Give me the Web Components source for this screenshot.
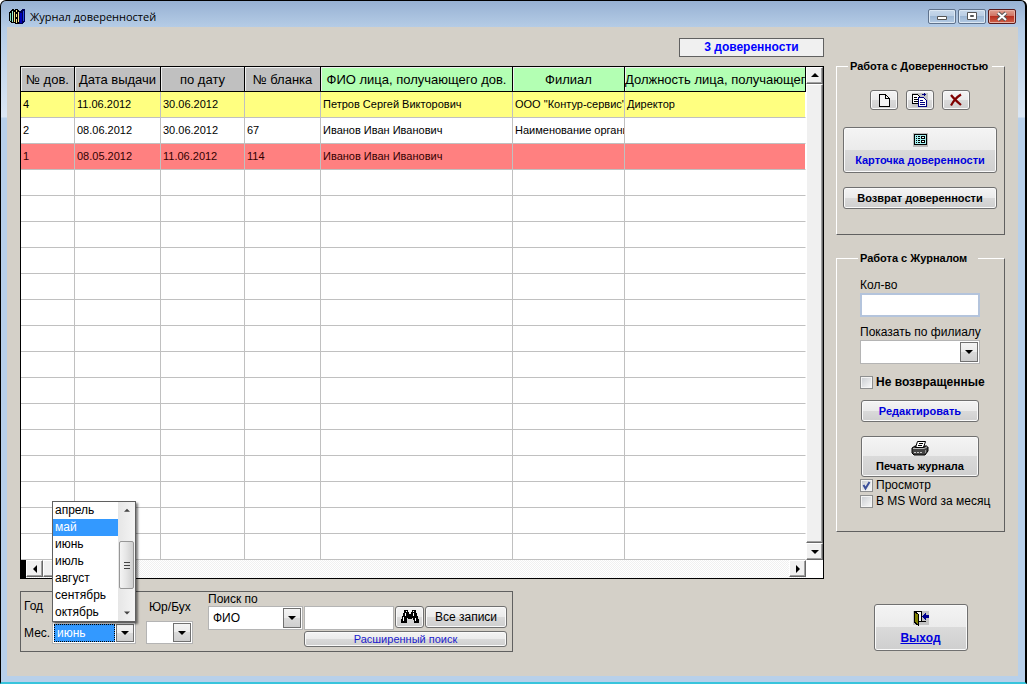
<!DOCTYPE html>
<html lang="ru">
<head>
<meta charset="utf-8">
<title>Журнал доверенностей</title>
<style>
    body {
        margin: 0;
        font: 12px/16px "Liberation Sans", Arial, sans-serif;
        color: #000;
    }
</style>
</head>
<body>

<journal-app></journal-app>

<script>
const BUTTON_FACE = `
    border: 1px solid #707070;
    border-radius: 3px;
    background: linear-gradient(#f4f4f4, #ebebeb 49%, #dadada 50%, #cfcfcf);
    box-shadow: inset 0 0 0 1px #fafafa;
`

const ICONS = {
    books: `<svg width="17" height="17" viewBox="0 0 17 17" shape-rendering="crispEdges">
        <path d="M0 4l3-3h2v14H2l-2-2z" fill="#000"/>
        <path d="M1 5h1v8H1z" fill="#7fe0c0"/><path d="M3 3h1v11H3z" fill="#9cf0d8"/>
        <path d="M4 3l2-2h2l3 3v11l-2 1H6l-2-2z" fill="#000"/>
        <path d="M5 4h1v10H5zM7 2h1v2H7zM7 6h1v3H7zM7 11h1v4H7zM9 4h1v10H9z" fill="#f4e48c"/>
        <path d="M10 4l3-3h3v12l-3 3h-3z" fill="#000050"/>
        <path d="M11 5h2v10h-2z" fill="#0000b8"/><path d="M14 3h1v10h-1z" fill="#2848e8"/></svg>`,
    page: `<svg width="16" height="16" viewBox="0 0 16 16" shape-rendering="crispEdges">
        <path d="M3.500 2.500h6l4 4v8h-10z" fill="#f4f4f4" stroke="#000"/>
        <path d="M9.500 2.500v4h4" fill="none" stroke="#000"/></svg>`,
    copy: `<svg width="16" height="16" viewBox="0 0 16 16" shape-rendering="crispEdges">
        <path d="M0 1h16v14H0z" fill="#c4c4c4"/>
        <path d="M.5 2.500h5l2 2v7h-7z" fill="#fff" stroke="#000"/>
        <path d="M2 5.500h3M2 7.500h4M2 9.500h4" stroke="#000"/>
        <path d="M6.500 5.500h5l3 3v6h-8z" fill="#fff" stroke="#000080"/>
        <path d="M8 8.500h3M8 10.500h5M8 12.500h5" stroke="#000080"/>
        <path d="M10 2.500h4M12.500 1v3" stroke="#000080"/></svg>`,
    cross: `<svg width="16" height="16" viewBox="0 0 16 16">
        <path d="M3 3q3 4 10 10M13 2.500Q7 6 3 13.500" fill="none" stroke="#800000" stroke-width="2.200"/></svg>`,
    card: `<svg width="15" height="14" viewBox="0 0 15 14" shape-rendering="crispEdges">
        <path d="M0 0h15v14H0z" fill="#bcbcbc"/>
        <path d="M1.500 1.500h12v10h-12z" fill="#a4f0f0" stroke="#000"/>
        <path d="M3 3.500h1M5 3.500h2M3 5.500h1M5 5.500h2M3 7.500h1M5 7.500h2M3 9.500h1M5 9.500h2" stroke="#000"/>
        <path d="M8.500 3.500h3v2h-3zM8.500 7.500h3v2h-3z" fill="#fff" stroke="#000"/></svg>`,
    printer: `<svg width="18" height="16" viewBox="0 0 18 16">
        <path d="M6.500 1.500h8l-2 6h-8z" fill="#fff" stroke="#000"/>
        <path d="M8 3.500h4M7 5.500h4" stroke="#000"/>
        <path d="M1 8l3-2h1l-.5 1.500h8L13 6h3l1 1v4l-3 4H3l-2-2z" fill="#444" stroke="#000"/>
        <path d="M2 8.500h11.500l3-2" fill="none" stroke="#b8b8b8"/>
        <path d="M3 12.500h9" stroke="#c8c8c8" stroke-dasharray="2 1"/>
        <path d="M14.500 10v3" stroke="#909090"/></svg>`,
    binoculars: `<svg width="18" height="16" viewBox="0 0 18 16" shape-rendering="crispEdges">
        <path d="M3 1h4v2h1v2h2V3h1V1h4v3h1v3h1v3h1v4h-5v-3h-1V9h-1v1H7V9H6v5H0v-4h1V7h1V4h1z"/>
        <path d="M4.500 4v3M2.500 8v4M12.500 4v3M14.500 9v3M5 2.500h1M12 2.500h1" stroke="#fff"/></svg>`,
    exit: `<svg width="16" height="16" viewBox="0 0 16 16" shape-rendering="crispEdges">
        <path d="M0 1h16v14H0z" fill="#c4c4c4"/>
        <path d="M1.500 1.500h7v10h-7z" fill="#f8f8f8" stroke="#000"/>
        <path d="M1 1l4 3v11l-4-3z" fill="#808000" stroke="#000"/>
        <path d="M8 11.500h5" stroke="#000"/>
        <path d="M9 6.500l4-3.500v2h3v3h-3v2z" fill="#000090"/></svg>`
}

const arrow = (dir) => {
    const shapes = {
        up: 'M0 5h8L4 1z',
        down: 'M0 2h8L4 6z',
        left: 'M6 0v8L2 4z',
        right: 'M2 0v8l4-4z'
    }
    return `<svg width="8" height="8" viewBox="0 0 8 8"><path d="${shapes[dir]}"/></svg>`
}

class BaseElement extends HTMLElement {
    constructor() {
        super()
        this.attachShadow({ mode: 'open' })
    }

    connectedCallback() {
        const template = document.createElement('template')
        template.innerHTML = this.render()
        this.shadowRoot.replaceChildren(template.content.cloneNode(true))
    }

    attr(name) {
        return this.getAttribute(name) || ''
    }
}

customElements.define('push-button', class extends BaseElement {
    render() {
        const icon = ICONS[this.attr('icon')] || ''
        return `
            <style>
                :host { display: flex; }
                button {
                    flex: 1;
                    display: flex;
                    flex-direction: column;
                    align-items: center;
                    justify-content: center;
                    gap: var(--icon-gap, 4px);
                    min-width: 0;
                    padding: 0;
                    font: inherit;
                    line-height: 14px;
                    color: inherit;
                    white-space: nowrap;
                    ${BUTTON_FACE}
                }
                svg { display: block; flex: none; }
            </style>
            <button type="button" aria-label="${this.attr('hint') || this.textContent}">
                ${icon}
                <slot></slot>
            </button>
        `
    }
})

customElements.define('text-field', class extends BaseElement {
    render() {
        const label = this.attr('label')
        return `
            <style>
                :host { display: flex; flex-direction: column; }
                input {
                    box-sizing: border-box;
                    width: 100%;
                    height: 24px;
                    padding: 2px 4px;
                    font: inherit;
                    background: #fff;
                    border: var(--field-border, 1px solid #b4b4b4);
                }
            </style>
            ${label ? `<label for="field">${label}</label>` : ''}
            <input id="field" type="text" aria-label="${label || this.attr('hint')}">
        `
    }
})

customElements.define('drop-down', class extends BaseElement {
    render() {
        return `
            <style>
                :host { display: flex; flex-direction: column; }
                :host([inline]) { flex-direction: row; align-items: center; }
                :host([inline]) label { width: 28px; }
                :host([inline]) .box { flex: 1; }
                label {
                    padding-left: var(--label-inset, 0);
                    line-height: var(--label-height, inherit);
                    white-space: nowrap;
                }
                .box {
                    display: grid;
                    grid-template-columns: 1fr 18px;
                    grid-template-rows: 100%;
                    align-items: center;
                    box-sizing: border-box;
                    flex: none;
                    height: var(--box-height, 24px);
                    padding: 1px;
                    background: #fff;
                    border: 1px solid #b4b4b4;
                }
                select {
                    appearance: none;
                    grid-area: 1 / 1 / 2 / 3;
                    min-width: 0;
                    height: 100%;
                    padding: 0 20px 0 3px;
                    font: inherit;
                    color: inherit;
                    background: none;
                    border: 0;
                    outline: 0;
                }
                :host([active]) select {
                    margin-right: 19px;
                    padding: 0 2px;
                    color: #fff;
                    background: #3399ff;
                    border: 1px dotted #000;
                }
                .arrow {
                    grid-area: 1 / 2;
                    display: flex;
                    align-items: center;
                    justify-content: center;
                    box-sizing: border-box;
                    height: 100%;
                    border: 1px solid #707070;
                    background: linear-gradient(#f4f4f4, #ebebeb 49%, #dadada 50%, #cfcfcf);
                    pointer-events: none;
                }
            </style>
            <label for="list">${this.attr('label')}</label>
            <div class="box">
                <select id="list"><option>${this.attr('value')}</option></select>
                <span class="arrow">${arrow('down')}</span>
            </div>
        `
    }
})

customElements.define('check-box', class extends BaseElement {
    render() {
        return `
            <style>
                :host { display: flex; }
                label {
                    display: flex;
                    align-items: center;
                    gap: 3px;
                    white-space: nowrap;
                }
                input {
                    appearance: none;
                    flex: none;
                    width: 13px;
                    height: 13px;
                    margin: 0;
                    border: 1px solid #8e8f8f;
                    background: linear-gradient(135deg, #cdd0d4, #f6f6f6) content-box, #f4f4f4;
                    padding: 1px;
                }
                .tick { display: grid; }
                .tick > * { grid-area: 1 / 1; }
                svg { display: none; pointer-events: none; }
                input:checked + svg { display: block; }
            </style>
            <label>
                <span class="tick">
                    <input type="checkbox" ${this.hasAttribute('checked') ? 'checked' : ''}>
                    <svg width="13" height="13" viewBox="0 0 13 13"><path d="M3.500 6l2 3.500L9.500 3" fill="none" stroke="#3b4f9a" stroke-width="2"/></svg>
                </span>
                <slot></slot>
            </label>
        `
    }
})

customElements.define('group-box', class extends BaseElement {
    render() {
        return `
            <style>
                :host { display: block; }
                fieldset {
                    min-width: 0;
                    margin: 0;
                    padding: 0;
                    border: 1px solid;
                    border-color: #fff #606060 #606060 #fff;
                }
                legend {
                    margin-left: var(--legend-inset, 11px);
                    padding: 0 var(--legend-gap, 4px) 0 2px;
                    font-size: 11px;
                    font-weight: bold;
                    line-height: 14px;
                }
            </style>
            <fieldset>
                <legend>${this.attr('caption')}</legend>
                <slot></slot>
            </fieldset>
        `
    }
})

customElements.define('month-list', class extends BaseElement {
    render() {
        const months = ['апрель', 'май', 'июнь', 'июль', 'август', 'сентябрь', 'октябрь']
        return `
            <style>
                :host {
                    display: grid;
                    grid-template-columns: 1fr 17px;
                    box-sizing: border-box;
                    border: 1px solid #606060;
                    background: #fff;
                    box-shadow: 2px 2px 2px rgba(0, 0, 0, .5);
                }
                ul { margin: 0; padding: 0; list-style: none; }
                li { padding: 0 2px; line-height: 17px; }
                li[aria-selected=true] { color: #fff; background: #3399ff; }
                .bar {
                    display: grid;
                    grid-template-rows: 17px 22px 48px 1fr 17px;
                    justify-items: center;
                    align-items: center;
                    background: linear-gradient(90deg, #e6e6e6, #f4f4f4);
                }
                .thumb {
                    grid-row: 3;
                    display: flex;
                    align-items: center;
                    justify-content: center;
                    box-sizing: border-box;
                    width: 15px;
                    height: 48px;
                    border: 1px solid #979797;
                    border-radius: 2px;
                    background: linear-gradient(90deg, #f4f4f4, #e6e6e6 45%, #cfcfcf);
                }
                .bar > :last-child { grid-row: 5; }
                .bar > svg { width: 6px; height: 6px; fill: #444; }
            </style>
            <ul role="listbox">
                ${months.map(m => `<li role="option" aria-selected="${m === 'май'}">${m}</li>`).join('')}
            </ul>
            <div class="bar">
                ${arrow('up')}
                <div class="thumb"><svg width="8" height="8" shape-rendering="crispEdges"><path d="M1 1.500h6M1 4.500h6M1 7.500h6" stroke="#444"/></svg></div>
                ${arrow('down')}
            </div>
        `
    }
})

customElements.define('journal-table', class extends BaseElement {
    render() {
        const columns = [
            ['№ дов.', 54], ['Дата выдачи', 86], ['по дату', 84], ['№ бланка', 76],
            ['ФИО лица, получающего дов.', 192], ['Филиал', 112], ['Должность лица, получающего дов.', 0]
        ]
        const rows = [
            ['4', '11.06.2012', '30.06.2012', '', 'Петров Сергей Викторович', 'ООО "Контур-сервис"', 'Директор'],
            ['2', '08.06.2012', '30.06.2012', '67', 'Иванов Иван Иванович', 'Наименование организации', ''],
            ['1', '08.05.2012', '11.06.2012', '114', 'Иванов Иван Иванович', '', '']
        ]
        // пустые строки до низа сетки
        while (rows.length < 18) rows.push(columns.map(() => ''))

        return `
            <style>
                :host {
                    display: grid;
                    grid-template-columns: minmax(0, 1fr) 17px;
                    grid-template-rows: auto 18px;
                    border: 1px solid #000;
                    background: #fff;
                }
                table {
                    width: 100%;
                    table-layout: fixed;
                    border-collapse: separate;
                    border-spacing: 0;
                }
                th, td {
                    box-sizing: border-box;
                    overflow: hidden;
                    white-space: nowrap;
                    border-right: 1px solid #c0c0c0;
                    border-bottom: 1px solid #c0c0c0;
                }
                th {
                    height: 25px;
                    padding: 1px 0 0;
                    font-size: 13px;
                    font-weight: normal;
                    background: #c0c0c0;
                    border-color: #000;
                    box-shadow: inset 1px 1px #f0f0f0;
                }
                th:nth-child(n + 5) { background: #b3ffb3; }
                td {
                    height: 26px;
                    padding: 0 0 2px 2px;
                    font-size: 11px;
                }
                td:last-child { border-right-color: transparent; background-clip: padding-box; }
                .open td { background-color: #ffff80; }
                .expired td { background-color: #ff8080; color: #300; }
                .track { display: flex; }
                .vertical { flex-direction: column; }
                .track button {
                    display: flex;
                    align-items: center;
                    justify-content: center;
                    box-sizing: border-box;
                    flex: none;
                    width: 17px;
                    height: 17px;
                    padding: 0;
                }
                .track button, .thumb {
                    background: #f0f0f0;
                    border: 1px solid;
                    border-color: #fff #696969 #696969 #fff;
                    box-shadow: inset -1px -1px #a0a0a0;
                }
                .vertical .thumb { flex: 1; }
                .horizontal {
                    background: repeating-conic-gradient(#f0f0f0 0 25%, #fff 0 50%) 0 0 / 2px 2px;
                }
                .horizontal::before { content: ""; width: 5px; background: #000; }
                .horizontal .thumb { width: 54px; height: 15px; }
                .horizontal button:last-child { margin-left: auto; }
            </style>
            <table>
                <colgroup>${columns.map(([, w]) => `<col${w ? ` style="width: ${w}px"` : ''}>`).join('')}</colgroup>
                <thead><tr>${columns.map(([name]) => `<th>${name}</th>`).join('')}</tr></thead>
                <tbody>
                    ${rows.map((row, i) => `<tr class="${['open', '', 'expired'][i] || ''}">${row.map(cell => `<td>${cell}</td>`).join('')}</tr>`).join('')}
                </tbody>
            </table>
            <div class="track vertical">
                <button type="button" aria-label="Вверх">${arrow('up')}</button>
                <div class="thumb"></div>
                <button type="button" aria-label="Вниз">${arrow('down')}</button>
            </div>
            <div class="track horizontal">
                <button type="button" aria-label="Влево">${arrow('left')}</button>
                <div class="thumb"></div>
                <button type="button" aria-label="Вправо">${arrow('right')}</button>
            </div>
        `
    }
})

customElements.define('search-panel', class extends BaseElement {
    render() {
        return `
            <style>
                :host {
                    display: flex;
                    align-items: flex-end;
                    align-self: flex-start;
                    box-sizing: border-box;
                    padding: 0 5px 0 3px;
                    border: 1px solid #606060;
                }
                .period {
                    position: relative;
                    display: flex;
                    flex-direction: column;
                    gap: 5px;
                    width: 112px;
                    margin: 0 10px 7px 0;
                    --box-height: 22px;
                }
                month-list {
                    position: absolute;
                    right: 0;
                    bottom: 22px;
                    width: 84px;
                }
                .kind {
                    width: 47px;
                    margin: 0 15px 7px 0;
                    --box-height: 23px;
                    --label-height: 28px;
                    --label-inset: 3px;
                }
                .search {
                    display: grid;
                    grid-template-columns: 95px 90px 29px 82px;
                    gap: 1px;
                    align-items: end;
                    margin-bottom: 4px;
                    line-height: 14px;
                }
                .search push-button { height: 22px; margin-bottom: 2px; }
                .search .wide {
                    grid-column: 2 / 5;
                    height: 16px;
                    margin: 0;
                    font-size: 11px;
                    color: #1a1acc;
                }
            </style>
            <div class="period">
                <drop-down inline label="Год"></drop-down>
                <drop-down inline active label="Мес." value="июнь"></drop-down>
                <month-list></month-list>
            </div>
            <drop-down class="kind" label="Юр/Бух"></drop-down>
            <div class="search">
                <drop-down label="Поиск по" value="ФИО"></drop-down>
                <text-field hint="Строка поиска"></text-field>
                <push-button icon="binoculars" hint="Найти"></push-button>
                <push-button>Все записи</push-button>
                <push-button class="wide">Расширенный поиск</push-button>
            </div>
        `
    }
})

customElements.define('app-window', class extends BaseElement {
    render() {
        return `
            <style>
                :host {
                    display: flex;
                    flex-direction: column;
                    box-sizing: border-box;
                    min-height: 100vh;
                    padding: 0 7px 6px 6px;
                    border: solid #000;
                    border-width: 1px 2px 2px 1px;
                    border-bottom-color: #38c4dc;
                    border-radius: 6px 6px 0 0;
                    background: linear-gradient(#97b1d3, #b5cce6 26px, #dbe7f4 116px, #b8d0ea 117px);
                }
                header {
                    display: flex;
                    align-items: center;
                    height: 26px;
                    padding: 0 2px 0 2px;
                }
                h1 {
                    flex: 1;
                    margin: 5px 0 0 4px;
                    font: 11px/16px "Open Sans", "Noto Sans", sans-serif;
                }
                header > svg { margin-top: 4px; }
                .buttons { display: flex; gap: 2px; margin-top: 4px; }
                .buttons button {
                    display: flex;
                    align-items: center;
                    justify-content: center;
                    box-sizing: border-box;
                    width: 28px;
                    height: 15px;
                    padding: 0;
                    border: 1px solid #5f728c;
                    border-radius: 2px;
                    background: linear-gradient(#c9d9eb, #b9cde4 49%, #9db7d4 50%, #b4cbe5);
                    box-shadow: inset 0 0 0 1px #dce8f4;
                }
                .buttons .close {
                    border-color: #5a1a1a;
                    background: linear-gradient(#e0a090, #d07060 49%, #b83020 50%, #d06048);
                    box-shadow: inset 0 0 0 1px #e8b0a4;
                }
                main { flex: 1; background: #d4d0c8; }
            </style>
            <header>
                ${ICONS.books}
                <h1>${this.attr('caption')}</h1>
                <div class="buttons">
                    <button type="button" aria-label="Свернуть"><svg width="12" height="11"><path d="M1.500 5.500h9v3h-9z" fill="#fff" stroke="#555"/></svg></button>
                    <button type="button" aria-label="Развернуть"><svg width="12" height="11"><path d="M1.500 1.500h9v7h-9z" fill="#fff" stroke="#555"/><path d="M4.500 4.500h3v1h-3z" fill="#9db7d4" stroke="#555"/></svg></button>
                    <button type="button" class="close" aria-label="Закрыть"><svg width="12" height="11"><path d="M2 2l8 7M10 2L2 9" stroke="#555" stroke-width="4"/><path d="M2 2l8 7M10 2L2 9" stroke="#fff" stroke-width="2"/></svg></button>
                </div>
            </header>
            <main><slot></slot></main>
        `
    }
})

customElements.define('journal-app', class extends BaseElement {
    render() {
        return `
            <style>
                :host { display: block; }
                .layout {
                    display: grid;
                    grid-template-columns: minmax(0, 1fr) 169px;
                    column-gap: 12px;
                    padding: 11px 13px 0;
                }
                .left, .right, .column { display: flex; flex-direction: column; }
                .count {
                    align-self: flex-end;
                    box-sizing: border-box;
                    width: 145px;
                    margin-bottom: 9px;
                    border: 1px solid #606060;
                    background: #f0f0f0;
                    color: #0000ff;
                    font-weight: bold;
                    line-height: 17px;
                    text-align: center;
                }
                search-panel { margin-top: 12px; }
                .right { padding-top: 21px; }
                .tools {
                    display: flex;
                    justify-content: center;
                    gap: 8px;
                    padding: 17px 1px 17px 0;
                }
                .tools push-button { width: 28px; height: 20px; }
                .cards {
                    display: flex;
                    flex-direction: column;
                    gap: 14px;
                    padding: 0 7px 25px 6px;
                    font-size: 11px;
                    font-weight: bold;
                }
                .cards push-button { height: 22px; }
                .cards push-button.tall { height: 46px; --icon-gap: 6px; }
                .blue { color: #0000dd; }
                .journal {
                    margin-top: 16px;
                    --legend-inset: 21px;
                    --legend-gap: 11px;
                }
                .column { padding: 12px 24px 22px 23px; }
                .column text-field { margin-bottom: 7px; --field-border: 2px solid #b4c4dc; }
                .column check-box { height: 16px; }
                .column push-button { margin: 0 1px; font-size: 11px; font-weight: bold; }
                .column .bold { margin: 10px 0; font-weight: bold; }
                .column .edit { height: 22px; margin-bottom: 14px; }
                .column .print { height: 41px; --icon-gap: 3px; }
                .exit {
                    align-self: center;
                    width: 94px;
                    height: 47px;
                    margin-top: 72px;
                    font-weight: bold;
                    --icon-gap: 5px;
                }
                .exit span { text-decoration: underline; }
            </style>
            <app-window caption="Журнал доверенностей">
                <div class="layout">
                    <div class="left">
                        <div class="count">3 доверенности</div>
                        <journal-table></journal-table>
                        <search-panel></search-panel>
                    </div>
                    <div class="right">
                        <group-box caption="Работа с Доверенностью">
                            <div class="tools">
                                <push-button icon="page" hint="Новая"></push-button>
                                <push-button icon="copy" hint="Копировать"></push-button>
                                <push-button icon="cross" hint="Удалить"></push-button>
                            </div>
                            <div class="cards">
                                <push-button class="tall blue" icon="card">Карточка доверенности</push-button>
                                <push-button>Возврат доверенности</push-button>
                            </div>
                        </group-box>
                        <group-box class="journal" caption="Работа с Журналом">
                            <div class="column">
                                <text-field label="Кол-во"></text-field>
                                <drop-down label="Показать по филиалу"></drop-down>
                                <check-box class="bold">Не возвращенные</check-box>
                                <push-button class="edit blue">Редактировать</push-button>
                                <push-button class="print" icon="printer">Печать журнала</push-button>
                                <check-box checked>Просмотр</check-box>
                                <check-box>В MS Word за месяц</check-box>
                            </div>
                        </group-box>
                        <push-button class="exit blue" icon="exit"><span>Выход</span></push-button>
                    </div>
                </div>
            </app-window>
        `
    }
})
</script>
</body>
</html>
